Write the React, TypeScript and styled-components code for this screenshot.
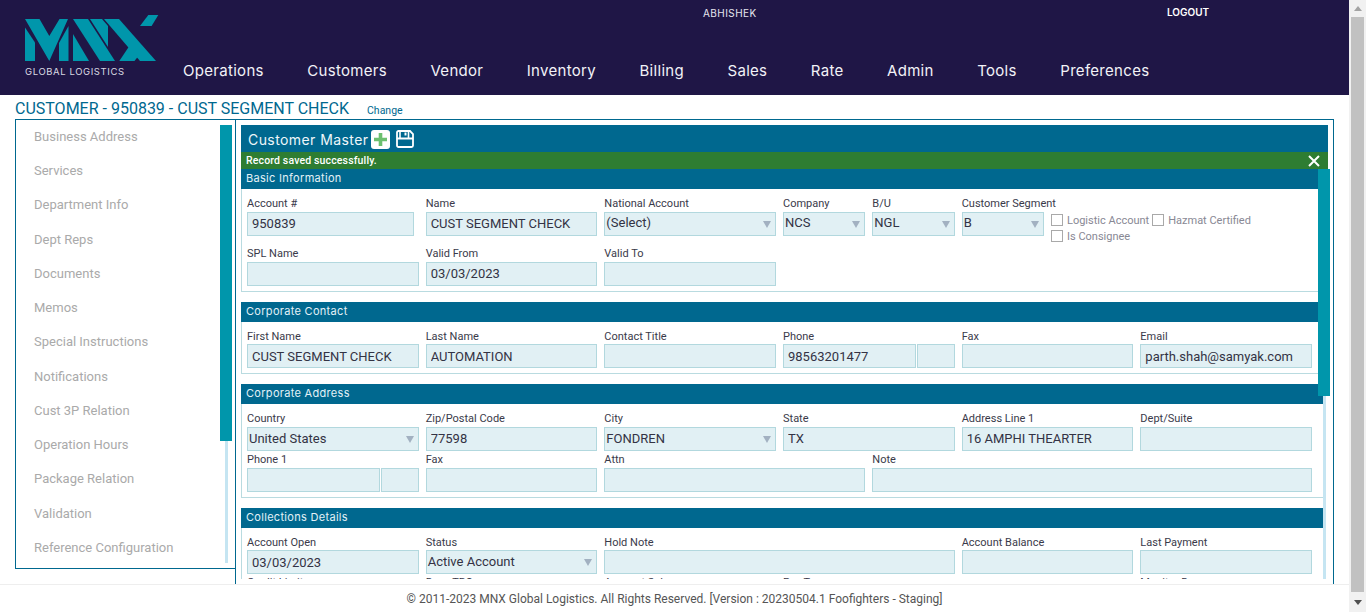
import { ReactNode } from "react";
import styled, { createGlobalStyle } from "styled-components";

const GlobalStyle = createGlobalStyle`
  html, body {
    margin: 0;
    height: 100%;
    overflow: hidden;
    background: #fff;
    font-family: Roboto, "Liberation Sans", sans-serif;
  }
  * { box-sizing: border-box; }
`;

const Shell = styled.div`
  display: flex;
  height: 612px;
`;

const Page = styled.div`
  flex: 1;
  min-width: 0;
  display: flex;
  flex-direction: column;
`;

const PageScrollbar = styled.div`
  width: 17px;
  background: #f1f1f1;
  display: flex;
  flex-direction: column;
  align-items: center;
`;

const ScrollArrow = styled.div<{ $down?: boolean }>`
  height: ${(p) => (p.$down ? "20px" : "17px")};
  flex: none;
  display: flex;
  align-items: center;
  justify-content: center;
  &::after {
    content: "";
    border-left: 4.5px solid transparent;
    border-right: 4.5px solid transparent;
    ${(p) => (p.$down ? "border-top: 5px solid #505050;" : "border-bottom: 5px solid #a3a3a3;")}
  }
`;

const ScrollThumb = styled.div`
  flex: 1;
  width: 13px;
  background: #c1c1c1;
`;

const Header = styled.header`
  height: 95px;
  flex: none;
  background: #1f1646;
  display: flex;
`;

const LogoBlock = styled.div`
  width: 183px;
  flex: none;
  padding: 15px 0 0 25px;
`;

const LogoMark = styled.svg`
  display: block;
  width: 134px;
  height: 47px;
  fill: #0096ab;
`;

const LogoText = styled.div`
  margin-top: 4px;
  font: 400 9.5px/12px Inter, sans-serif;
  letter-spacing: 0.6px;
  color: #d9d9e2;
  white-space: nowrap;
`;

const HeaderRight = styled.div`
  flex: 1;
  min-width: 0;
`;

const TopBar = styled.div`
  height: 26px;
  display: flex;
  align-items: center;
  color: #fff;
`;

const UserName = styled.div`
  margin-left: 520px;
  width: 464px;
  font: 400 10px/12px Inter, sans-serif;
  letter-spacing: 0.45px;
  color: #e6e6ee;
`;

const Logout = styled.a`
  margin-top: -2px;
  font: 600 10px/12px Inter, sans-serif;
  color: #fff;
`;

const Nav = styled.nav`
  margin-top: 33px;
  display: flex;
  gap: 43.5px;
`;

const NavItem = styled.a`
  font: 400 15px/24px Inter, sans-serif;
  letter-spacing: 0.3px;
  color: #f2f2f7;
`;

const TitleRow = styled.div`
  height: 24px;
  flex: none;
  padding: 3px 0 0 15px;
  display: flex;
  align-items: center;
  gap: 18px;
`;

const Title = styled.h1`
  margin: 0;
  font: 400 16px/21px Roboto, sans-serif;
  color: #00688f;
`;

const ChangeLink = styled.a`
  margin-top: 3px;
  font-size: 10.5px;
  color: #00688f;
`;

const Frame = styled.div`
  flex: 1;
  min-height: 0;
  margin-left: 15px;
  width: 1319px;
  border-top: 1px solid #00688f;
  border-right: 1px solid #00688f;
  display: flex;
  align-items: flex-start;
`;

const Sidebar = styled.aside`
  position: relative;
  width: 220px;
  flex: none;
  height: 449px;
  border-left: 1px solid #00688f;
  border-bottom: 1px solid #00688f;
`;

const SideItem = styled.div`
  height: 34.25px;
  padding-left: 18px;
  display: flex;
  align-items: center;
  font-size: 13px;
  color: #aaaaaa;
  &:first-child {
    margin-top: -0.7px;
  }
`;

const Track = styled.div<{ $left: number; $top: number; $height: number }>`
  position: absolute;
  left: ${(p) => p.$left}px;
  top: ${(p) => p.$top}px;
  width: 3px;
  height: ${(p) => p.$height}px;
  background: #c5e5f2;
`;

const Thumb = styled.div<{ $left: number; $top: number; $height: number }>`
  position: absolute;
  left: ${(p) => p.$left}px;
  top: ${(p) => p.$top}px;
  width: 12px;
  height: ${(p) => p.$height}px;
  background: #0096ab;
`;

const Content = styled.main`
  position: relative;
  flex: 1;
  height: 100%;
  border-left: 1px solid #00688f;
  padding: 5px 5px 0;
  display: flex;
  flex-direction: column;
`;

const MasterBar = styled.div`
  height: 27px;
  flex: none;
  background: #00688f;
  padding-left: 7px;
  display: flex;
  align-items: center;
  color: #fff;
`;

const MasterTitle = styled.span`
  margin-top: 3px;
  font: 400 14px/24px Inter, sans-serif;
  letter-spacing: 0.42px;
  color: #eef6fa;
`;

const PlusIcon = styled.svg`
  margin-left: 3px;
  width: 19px;
  height: 19px;
  margin-top: 1px;
`;

const SaveIcon = styled.svg`
  margin-left: 6px;
  margin-top: 1px;
  width: 18px;
  height: 18px;
`;

const Notice = styled.div`
  height: 17px;
  flex: none;
  background: #2e7d32;
  padding: 0 8px 0 5px;
  display: flex;
  align-items: center;
  justify-content: space-between;
  font-size: 10.5px;
  font-weight: 500;
  letter-spacing: 0.15px;
  color: #fff;
`;

const CloseIcon = styled.svg`
  width: 12px;
  height: 12px;
  stroke: #fff;
  stroke-width: 2;
`;

const FormArea = styled.div`
  width: 1082px;
  height: 410px;
  overflow: hidden;
`;

const Section = styled.section`
  margin-bottom: 10px;
`;

const SectionHead = styled.div`
  height: 20px;
  background: #00688f;
  padding-left: 5px;
  font: 400 11px/19px Inter, sans-serif;
  letter-spacing: 0.3px;
  color: #e3f1f7;
`;

const SectionBody = styled.div<{ $top: number; $gap: number; $drop?: boolean }>`
  border-left: 1px solid #b9dbe0;
  border-bottom: 1px solid #b9dbe0;
  padding: ${(p) => p.$top}px 11px 5px 5px;
  display: grid;
  grid-template-columns: repeat(12, 1fr);
  column-gap: 7px;
  row-gap: ${(p) => p.$gap}px;
  ${(p) =>
    p.$drop &&
    `
    label { padding-top: 1px; }
    input { padding-top: 1px; padding-bottom: 0; }
  `}
`;

const FieldBox = styled.div<{ $span: number }>`
  grid-column: span ${(p) => p.$span};
  min-width: 0;
`;

const Label = styled.label`
  display: block;
  height: 16px;
  font-size: 11px;
  line-height: 15px;
  color: #3a3a4a;
  white-space: nowrap;
`;

const Input = styled.input<{ $narrow?: boolean }>`
  display: block;
  width: ${(p) => (p.$narrow ? "167px" : "100%")};
  height: 24px;
  min-width: 0;
  padding: 0 4px 1px;
  background: #e1f0f4;
  border: 1px solid #b2d8de;
  border-radius: 0;
  font: 400 13px Roboto, sans-serif;
  color: #333344;
  outline: none;
`;

const SplitInputs = styled.div`
  display: flex;
  gap: 1px;
`;

const SideInput = styled(Input)`
  flex: none;
  width: 38px;
`;

const SelectBox = styled.div<{ $low?: boolean }>`
  position: relative;
  height: 24px;
  padding: 0 1px ${(p) => (p.$low ? "1px" : "3px")};
  background: #e1f0f4;
  border: 1px solid #b2d8de;
  display: flex;
  align-items: center;
  font-size: 13px;
  color: #333344;
  &::after {
    content: "";
    position: absolute;
    right: 4px;
    top: 8px;
    border-left: 4px solid transparent;
    border-right: 4px solid transparent;
    border-top: 7px solid #a2b1c1;
  }
`;

const Checks = styled.div`
  margin-top: 16px;
  height: 24px;
  display: flex;
  flex-wrap: wrap;
  align-content: flex-start;
  column-gap: 3px;
`;

const CheckItem = styled.label`
  height: 16px;
  display: flex;
  align-items: center;
  gap: 4px;
  font-size: 11px;
  color: #888894;
  white-space: nowrap;
`;

const CheckBox = styled.span`
  width: 12px;
  height: 12px;
  flex: none;
  border: 1px solid #a9a9a9;
  background: #fff;
`;

const CheckBreak = styled.div`
  flex-basis: 100%;
`;

const Footer = styled.footer`
  height: 28px;
  flex: none;
  border-top: 1px solid #eeeeee;
  display: flex;
  align-items: center;
  justify-content: center;
  font-size: 12px;
  color: #555555;
`;

const NAV = ["Operations", "Customers", "Vendor", "Inventory", "Billing", "Sales", "Rate", "Admin", "Tools", "Preferences"];

const SIDE = [
  "Business Address",
  "Services",
  "Department Info",
  "Dept Reps",
  "Documents",
  "Memos",
  "Special Instructions",
  "Notifications",
  "Cust 3P Relation",
  "Operation Hours",
  "Package Relation",
  "Validation",
  "Reference Configuration",
];

interface FieldProps {
  label: string;
  span?: number;
  value?: string;
  narrow?: boolean;
  low?: boolean;
}

const Field = ({ label, span = 2, value = "", narrow }: FieldProps) => (
  <FieldBox $span={span}>
    <Label>{label}</Label>
    <Input readOnly value={value} $narrow={narrow} />
  </FieldBox>
);

const SelectField = ({ label, span = 2, value = "", low }: FieldProps) => (
  <FieldBox $span={span}>
    <Label>{label}</Label>
    <SelectBox $low={low}>{value}</SelectBox>
  </FieldBox>
);

const SplitField = ({ label, value = "" }: FieldProps) => (
  <FieldBox $span={2}>
    <Label>{label}</Label>
    <SplitInputs>
      <Input readOnly value={value} />
      <SideInput readOnly value="" />
    </SplitInputs>
  </FieldBox>
);

const Check = ({ children }: { children: ReactNode }) => (
  <CheckItem>
    <CheckBox />
    {children}
  </CheckItem>
);

export default function App() {
  return (
    <Shell>
      <GlobalStyle />
      <Page>
        <Header>
          <LogoBlock>
            <LogoMark viewBox="25 15 134 47">
              <polygon points="25,27.5 35,42.5 35,61 25,61" />
              <polygon points="25,19 39.5,19 49.3,36 59.5,19 68,19 49.3,61" />
              <polygon points="68.5,26 68.5,61 59,61 59,43" />
              <polygon points="73,19 88,19 115,61 100,61" />
              <polygon points="73,34 89,61 73,61" />
              <polygon points="90,19 102,19 108,26 108,47" />
              <polygon points="104,19 119,19 156,61 140,61" />
              <polygon points="119.3,61 130,45 138,56.5 134.5,61" />
              <polygon points="140,26 148.3,15 158.3,15 151.6,26" />
            </LogoMark>
            <LogoText>GLOBAL LOGISTICS</LogoText>
          </LogoBlock>
          <HeaderRight>
            <TopBar>
              <UserName>ABHISHEK</UserName>
              <Logout>LOGOUT</Logout>
            </TopBar>
            <Nav>
              {NAV.map((item) => (
                <NavItem key={item}>{item}</NavItem>
              ))}
            </Nav>
          </HeaderRight>
        </Header>
        <TitleRow>
          <Title>CUSTOMER - 950839 - CUST SEGMENT CHECK</Title>
          <ChangeLink>Change</ChangeLink>
        </TitleRow>
        <Frame>
          <Sidebar>
            {SIDE.map((item) => (
              <SideItem key={item}>{item}</SideItem>
            ))}
            <Track $left={209} $top={320} $height={123} />
            <Thumb $left={204} $top={5} $height={316} />
          </Sidebar>
          <Content>
            <MasterBar>
              <MasterTitle>Customer Master</MasterTitle>
              <PlusIcon viewBox="0 0 19 19">
                <rect width="19" height="19" rx="3" fill="#fff" />
                <path d="M9.5 3v13M3 9.5h13" stroke="#6cc070" strokeWidth="3.6" />
              </PlusIcon>
              <SaveIcon viewBox="0 0 18 18">
                <path d="M2.5 1h11.5l3 3v11.5a1.5 1.5 0 0 1-1.5 1.5h-13a1.5 1.5 0 0 1-1.5-1.5v-13a1.5 1.5 0 0 1 1.5-1.5z" fill="none" stroke="#fff" strokeWidth="1.8" />
                <path d="M1 8.5h16" stroke="#fff" strokeWidth="2" />
                <path d="M4 1v7M12.5 1v7" stroke="#fff" strokeWidth="1.6" />
                <path d="M9.5 2.5v3" stroke="#fff" strokeWidth="2" />
              </SaveIcon>
            </MasterBar>
            <Notice>
              Record saved successfully.
              <CloseIcon viewBox="0 0 12 12">
                <path d="M1 1l10 10M11 1L1 11" />
              </CloseIcon>
            </Notice>
            <FormArea>
              <Section>
                <SectionHead>Basic Information</SectionHead>
                <SectionBody $top={7} $gap={10}>
                  <Field label="Account #" value="950839" narrow />
                  <Field label="Name" value="CUST SEGMENT CHECK" />
                  <SelectField label="National Account" value="(Select)" />
                  <SelectField label="Company" span={1} value="NCS" />
                  <SelectField label="B/U" span={1} value="NGL" />
                  <SelectField label="Customer Segment" span={1} value="B" />
                  <FieldBox $span={3}>
                    <Checks>
                      <Check>Logistic Account</Check>
                      <Check>Hazmat Certified</Check>
                      <CheckBreak />
                      <Check>Is Consignee</Check>
                    </Checks>
                  </FieldBox>
                  <Field label="SPL Name" />
                  <Field label="Valid From" value="03/03/2023" />
                  <Field label="Valid To" />
                </SectionBody>
              </Section>
              <Section>
                <SectionHead>Corporate Contact</SectionHead>
                <SectionBody $top={6} $gap={10} $drop>
                  <Field label="First Name" value="CUST SEGMENT CHECK" />
                  <Field label="Last Name" value="AUTOMATION" />
                  <Field label="Contact Title" />
                  <SplitField label="Phone" value="98563201477" />
                  <Field label="Fax" />
                  <Field label="Email" value="parth.shah@samyak.com" />
                </SectionBody>
              </Section>
              <Section>
                <SectionHead>Corporate Address</SectionHead>
                <SectionBody $top={7} $gap={1}>
                  <SelectField label="Country" value="United States" low />
                  <Field label="Zip/Postal Code" value="77598" />
                  <SelectField label="City" value="FONDREN" low />
                  <Field label="State" value="TX" />
                  <Field label="Address Line 1" value="16 AMPHI THEARTER" />
                  <Field label="Dept/Suite" />
                  <SplitField label="Phone 1" />
                  <Field label="Fax" />
                  <Field label="Attn" span={3} />
                  <Field label="Note" span={5} />
                </SectionBody>
              </Section>
              <Section>
                <SectionHead>Collections Details</SectionHead>
                <SectionBody $top={6} $gap={0} $drop>
                  <Field label="Account Open" value="03/03/2023" />
                  <SelectField label="Status" value="Active Account" low />
                  <Field label="Hold Note" span={4} />
                  <Field label="Account Balance" />
                  <Field label="Last Payment" />
                  <Field label="Credit Limit" />
                  <Field label="Days TBO" />
                  <Field label="Account Sales" />
                  <Field label="Pay Terms" />
                  <FieldBox $span={2} />
                  <Field label="Monitor Days" />
                </SectionBody>
              </Section>
            </FormArea>
            <Track $left={1087} $top={49} $height={410} />
            <Thumb $left={1082} $top={49} $height={227} />
          </Content>
        </Frame>
        <Footer>© 2011-2023 MNX Global Logistics. All Rights Reserved. [Version : 20230504.1 Foofighters - Staging]</Footer>
      </Page>
      <PageScrollbar>
        <ScrollArrow />
        <ScrollThumb />
        <ScrollArrow $down />
      </PageScrollbar>
    </Shell>
  );
}
